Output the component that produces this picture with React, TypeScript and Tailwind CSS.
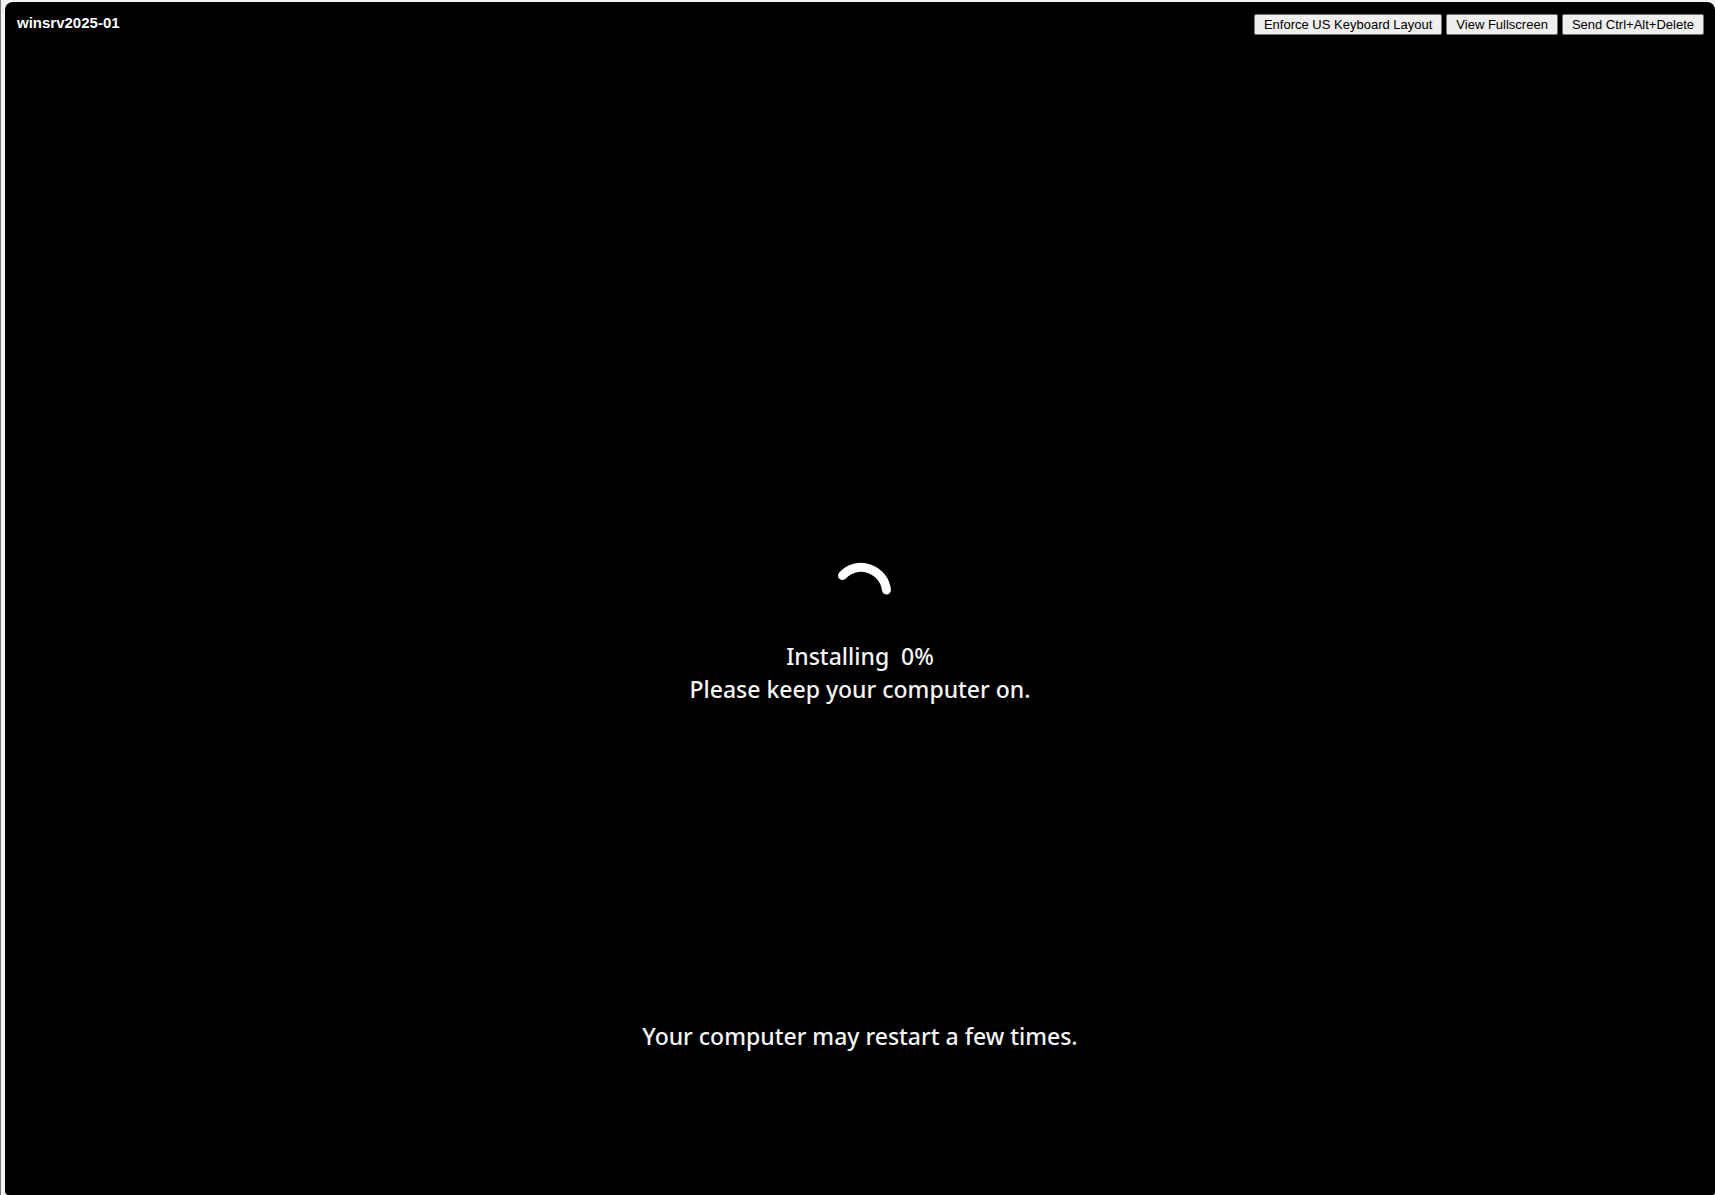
const actions = ['Enforce US Keyboard Layout', 'View Fullscreen', 'Send Ctrl+Alt+Delete'];

function Spinner() {
  return (
    <svg
      role="status"
      aria-label="Installing"
      viewBox="0 0 60 60"
      className="h-[60px] w-[60px] overflow-visible"
      fill="none"
      stroke="#ffffff"
      strokeWidth="9"
      strokeLinecap="round"
    >
      <path d="M12.5 13.5A25.5 25.5 0 0 1 56.5 28" />
    </svg>
  );
}

export default function App() {
  return (
    <div className="flex min-h-screen flex-col border-l border-[#7a7a7a] bg-[#f3f3f3] pt-0.5 pl-1 font-['Liberation_Sans',Arial,sans-serif]">
      <main className="flex grow flex-col rounded-t-lg rounded-br-xs rounded-bl-sm bg-black text-white">
        <header className="flex items-start justify-between pt-3 pr-[11px] pl-3">
          <h1 className="text-[15px] leading-[18px] font-bold">winsrv2025-01</h1>
          <div className="flex gap-1">
            {actions.map((label) => (
              <button
                key={label}
                type="button"
                className="h-[21px] rounded-xs border border-[#767676] bg-[#efefef] px-[9px] text-[13px] leading-[19px] text-black"
              >
                {label}
              </button>
            ))}
          </div>
        </header>
        <section className="flex grow flex-col items-center pt-[527px] text-center font-['Noto_Sans','Open_Sans',sans-serif] text-[23px] leading-[33px] font-medium text-[#f5f5f5]">
          <Spinner />
          <div className="mt-[18px]">
            <p className="whitespace-pre">Installing  0%</p>
            <p>Please keep your computer on.</p>
          </div>
          <p className="mt-[314px]">Your computer may restart a few times.</p>
        </section>
      </main>
    </div>
  );
}
